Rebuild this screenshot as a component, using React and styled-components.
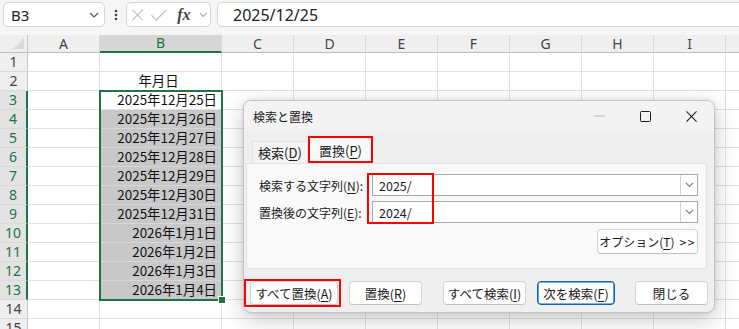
import styled, { createGlobalStyle } from 'styled-components';

const GlobalStyle = createGlobalStyle`
  html, body {
    margin: 0;
    padding: 0;
    width: 739px;
    height: 329px;
    overflow: hidden;
    background: #fff;
  }
  body {
    font-family: 'Noto Sans', 'Noto Sans CJK JP', sans-serif;
    color: #222;
  }
`;

const JP = `'Noto Sans CJK JP', 'Noto Sans', sans-serif`;

const Page = styled.div`
  position: relative;
  width: 739px;
  height: 329px;
  overflow: hidden;
`;

/* ---------- formula bar ---------- */

const Toolbar = styled.div`
  height: 35px;
  background: #f6f6f6;
  display: flex;
  align-items: flex-start;
  padding: 2px 0 0 3px;
  box-sizing: border-box;
`;

const Box = styled.div`
  height: 25px;
  box-sizing: border-box;
  background: #fff;
  border: 1px solid #d6d6d6;
  border-radius: 5px;
  display: flex;
  align-items: center;
`;

const NameBox = styled(Box)`
  width: 102px;
  padding: 0 5px 0 7px;
  justify-content: space-between;
  font-size: 15px;
  color: #222;
`;

const Ellipsis = styled.div`
  width: 21px;
  height: 25px;
  display: flex;
  align-items: center;
  justify-content: center;
`;

const FxBox = styled(Box)`
  width: 85px;
  padding: 0 3px 0 5px;
  gap: 8px;
`;

const Fx = styled.span`
  font-family: 'Liberation Serif', serif;
  font-style: italic;
  font-weight: bold;
  font-size: 16px;
  color: #444;
  margin-left: 2px;
`;

const FormulaBox = styled(Box)`
  flex: 1;
  margin-left: 6px;
  margin-right: -12px;
  padding-left: 15px;
  font-size: 16px;
  color: #222;
`;

/* ---------- sheet ---------- */

const Sheet = styled.div`
  position: relative;
  display: grid;
  grid-template-columns: 28px 72px 122px 72px 72px 72px 72px 72px 72px 72px 60px;
  grid-template-rows: 18px repeat(15, 19px);
`;

const Corner = styled.div`
  background: #efefef;
  border-right: 1px solid #c6c6c6;
  border-bottom: 1px solid #bdbdbd;
  position: relative;
  &::after {
    content: '';
    position: absolute;
    right: 3px;
    bottom: 3px;
    border-left: 11px solid transparent;
    border-bottom: 11px solid #dadada;
  }
`;

const ColHead = styled.div`
  background: ${(p) => (p.$active ? '#d6d6d6' : '#efefef')};
  border-right: 1px solid #d9d9d9;
  border-bottom: ${(p) => (p.$active ? '2px solid #217346' : '1px solid #bdbdbd')};
  color: ${(p) => (p.$active ? '#217346' : '#444')};
  font-size: 14px;
  display: flex;
  align-items: center;
  justify-content: center;
  box-sizing: border-box;
  line-height: 1;
`;

const RowHead = styled.div`
  background: ${(p) => (p.$active ? '#e3e3e3' : '#efefef')};
  border-bottom: 1px solid #d9d9d9;
  border-right: ${(p) => (p.$active ? '2px solid #217346' : '1px solid #c6c6c6')};
  color: ${(p) => (p.$active ? '#217346' : '#444')};
  font-size: 14px;
  display: flex;
  align-items: center;
  justify-content: center;
  box-sizing: border-box;
  line-height: 1;
`;

const Cell = styled.div`
  background: ${(p) => (p.$fill ? '#c8c8c8' : '#fff')};
  border-right: 1px solid #e1e1e1;
  border-bottom: 1px solid ${(p) => (p.$fill ? '#d6d6d6' : '#e1e1e1')};
  box-sizing: border-box;
  font-family: ${JP};
  font-size: 13.4px;
  color: #111;
  display: flex;
  align-items: center;
  justify-content: ${(p) => p.$align || 'flex-end'};
  padding: 0 4px 0 0;
  line-height: 1;
  white-space: nowrap;
`;

const Selection = styled.div`
  position: absolute;
  left: 99px;
  top: 55px;
  width: 124px;
  height: 211px;
  border: 2px solid #217346;
  box-sizing: border-box;
  pointer-events: none;
  &::after {
    content: '';
    position: absolute;
    right: -5px;
    bottom: -5px;
    width: 6px;
    height: 6px;
    background: #217346;
    border: 1px solid #fff;
  }
`;

/* ---------- dialog ---------- */

const Dialog = styled.div`
  position: absolute;
  left: 243px;
  top: 100px;
  width: 472px;
  height: 213px;
  box-sizing: border-box;
  background: #efefef;
  border: 1px solid #c4c4c4;
  border-radius: 8px;
  box-shadow: 0 6px 22px rgba(0, 0, 0, 0.22), 0 0 4px rgba(0, 0, 0, 0.08);
  overflow: hidden;
  font-family: ${JP};
  font-size: 12px;
  color: #1b1b1b;
`;

const TitleBar = styled.div`
  height: 30px;
  background: #f3f3f3;
  display: flex;
  align-items: center;
  padding-left: 9px;
`;

const Title = styled.div`
  flex: 1;
`;

const WinBtn = styled.div`
  width: 46px;
  height: 30px;
  display: flex;
  align-items: center;
  justify-content: center;
`;

const TabRow = styled.div`
  height: 32px;
  display: flex;
  align-items: flex-end;
  padding-left: 8px;
`;

const Tab = styled.div`
  width: ${(p) => (p.$active ? '65px' : '56px')};
  height: ${(p) => (p.$active ? '27px' : '22px')};
  box-sizing: border-box;
  display: flex;
  align-items: center;
  justify-content: center;
  font-size: 13px;
  background: ${(p) => (p.$active ? '#f9f9f9' : '#f4f4f4')};
  border: 1px solid #e2e2e2;
  border-bottom: none;
  outline: ${(p) => (p.$marked ? '2px solid #f00' : 'none')};
  outline-offset: -2px;
  position: relative;
  z-index: 1;
`;

const Panel = styled.div`
  position: relative;
  margin: 0 7px 0 2px;
  height: 106px;
  box-sizing: border-box;
  background: #f9f9f9;
  border: 1px solid #e3e3e3;
  padding: 10px 8px 0 12px;
`;

const FieldRow = styled.div`
  display: flex;
  align-items: center;
  height: 22px;
  margin-bottom: 5px;
`;

const Label = styled.div`
  width: 113px;
  font-size: 12px;
  white-space: nowrap;
`;

const Combo = styled.div`
  flex: 1;
  height: 22px;
  box-sizing: border-box;
  background: #fff;
  border: 1px solid #a8a8a8;
  display: flex;
  align-items: center;
`;

const ComboText = styled.div`
  flex: 1;
  padding-left: 6px;
  font-size: 12.5px;
`;

const ComboBtn = styled.div`
  width: 16px;
  height: 100%;
  border-left: 1px solid #d4d4d4;
  display: flex;
  align-items: center;
  justify-content: center;
`;

const Marker = styled.div`
  position: absolute;
  left: 120px;
  top: 9px;
  width: 67px;
  height: 51px;
  border: 2px solid #f00;
  box-sizing: border-box;
  pointer-events: none;
`;

const OptionRow = styled.div`
  display: flex;
  justify-content: flex-end;
  margin-top: 6px;
`;

const Button = styled.div`
  width: ${(p) => p.$w}px;
  height: ${(p) => p.$h || 24}px;
  margin-left: ${(p) => p.$ml || 0}px;
  box-sizing: border-box;
  background: #fdfdfd;
  border: 1px solid ${(p) => (p.$focus ? '#0a63b4' : '#d3d3d3')};
  border-bottom-color: ${(p) => (p.$focus ? '#0a63b4' : '#c2c2c2')};
  box-shadow: ${(p) => (p.$focus ? 'inset 0 0 0 0.6px #0a63b4' : 'none')};
  border-radius: 4px;
  display: flex;
  align-items: center;
  justify-content: center;
  font-size: ${(p) => p.$fs || 12.5}px;
  white-space: nowrap;
  flex-shrink: 0;
`;

const MarkedWrap = styled.div`
  border: 2px solid #f00;
  padding: 0 1px 0 4px;
  display: flex;
  align-items: center;
  height: 28px;
  box-sizing: border-box;
`;

const ButtonRow = styled.div`
  display: flex;
  align-items: center;
  margin-top: 10px;
`;

const U = styled.span`
  text-decoration: underline;
  text-underline-offset: 2px;
`;

const Arrows = styled.span`
  letter-spacing: 1.5px;
  margin-left: 5px;
`;

/* ---------- icons ---------- */

const Chevron = ({ size = 10, color = '#555' }) => (
  <svg width={size} height={size * 0.6} viewBox="0 0 10 6">
    <path d="M1 1l4 4 4-4" fill="none" stroke={color} strokeWidth="1.2" />
  </svg>
);

const Dots = () => (
  <svg width="4" height="12" viewBox="0 0 4 12">
    <circle cx="2" cy="2" r="1.3" fill="#444" />
    <circle cx="2" cy="6" r="1.3" fill="#444" />
    <circle cx="2" cy="10" r="1.3" fill="#444" />
  </svg>
);

const Cross = ({ size = 12, color = '#bbb', w = 1.1 }) => (
  <svg width={size} height={size} viewBox="0 0 12 12">
    <path d="M0.5 0.5l11 11M11.5 0.5l-11 11" stroke={color} strokeWidth={w} />
  </svg>
);

const Check = () => (
  <svg width="17" height="12" viewBox="0 0 17 12">
    <path d="M0.5 6l5 5.5L16.5 0.5" fill="none" stroke="#bbb" strokeWidth="1.1" />
  </svg>
);

const Minimize = () => (
  <svg width="11" height="2" viewBox="0 0 11 2">
    <path d="M0 1h11" stroke="#b5b5b5" strokeWidth="1" />
  </svg>
);

const Maximize = () => (
  <svg width="11" height="11" viewBox="0 0 11 11">
    <rect x="0.5" y="0.5" width="10" height="10" rx="1" fill="none" stroke="#1b1b1b" strokeWidth="1" />
  </svg>
);

/* ---------- data ---------- */

const cols = ['A', 'B', 'C', 'D', 'E', 'F', 'G', 'H', 'I', ''];

const dates = {
  2: '年月日',
  3: '2025年12月25日',
  4: '2025年12月26日',
  5: '2025年12月27日',
  6: '2025年12月28日',
  7: '2025年12月29日',
  8: '2025年12月30日',
  9: '2025年12月31日',
  10: '2026年1月1日',
  11: '2026年1月2日',
  12: '2026年1月3日',
  13: '2026年1月4日',
};

const rows = Array.from({ length: 15 }, (_, i) => i + 1);

export default function App() {
  return (
    <>
      <GlobalStyle />
      <Page>
        <Toolbar>
          <NameBox>
            <span>B3</span>
            <Chevron />
          </NameBox>
          <Ellipsis>
            <Dots />
          </Ellipsis>
          <FxBox>
            <Cross />
            <Check />
            <Fx>fx</Fx>
            <Chevron size={9} color="#999" />
          </FxBox>
          <FormulaBox>2025/12/25</FormulaBox>
        </Toolbar>

        <Sheet>
          <Corner />
          {cols.map((c, i) => (
            <ColHead key={'h' + i} $active={c === 'B'}>
              {c}
            </ColHead>
          ))}
          {rows.map((r) => {
            const active = r >= 3 && r <= 13;
            return [
              <RowHead key={'r' + r} $active={active}>
                {r}
              </RowHead>,
              ...cols.map((c, i) => (
                <Cell
                  key={r + '-' + i}
                  $fill={c === 'B' && r >= 4 && r <= 13}
                  $align={r === 2 ? 'center' : 'flex-end'}
                >
                  {c === 'B' ? dates[r] : null}
                </Cell>
              )),
            ];
          })}
          <Selection />
        </Sheet>

        <Dialog>
          <TitleBar>
            <Title>検索と置換</Title>
            <WinBtn>
              <Minimize />
            </WinBtn>
            <WinBtn>
              <Maximize />
            </WinBtn>
            <WinBtn>
              <Cross size={11} color="#1b1b1b" w={1.1} />
            </WinBtn>
          </TitleBar>

          <TabRow>
            <Tab>
              検索(<U>D</U>)
            </Tab>
            <Tab $active $marked>
              置換(<U>P</U>)
            </Tab>
          </TabRow>

          <Panel>
            <FieldRow>
              <Label>
                検索する文字列(<U>N</U>):
              </Label>
              <Combo>
                <ComboText>2025/</ComboText>
                <ComboBtn>
                  <Chevron size={9} color="#777" />
                </ComboBtn>
              </Combo>
            </FieldRow>
            <FieldRow>
              <Label>
                置換後の文字列(<U>E</U>):
              </Label>
              <Combo>
                <ComboText>2024/</ComboText>
                <ComboBtn>
                  <Chevron size={9} color="#777" />
                </ComboBtn>
              </Combo>
            </FieldRow>
            <Marker />
            <OptionRow>
              <Button $w={101} $h={25} $fs={12}>
                オプション(<U>T</U>)<Arrows>&gt;&gt;</Arrows>
              </Button>
            </OptionRow>
          </Panel>

          <ButtonRow>
            <MarkedWrap>
              <Button $w={88}>
                すべて置換(<U>A</U>)
              </Button>
            </MarkedWrap>
            <Button $w={73} $ml={8}>
              置換(<U>R</U>)
            </Button>
            <Button $w={83} $ml={21}>
              すべて検索(<U>I</U>)
            </Button>
            <Button $w={78} $ml={11} $focus>
              次を検索(<U>F</U>)
            </Button>
            <Button $w={73} $ml={20}>
              閉じる
            </Button>
          </ButtonRow>
        </Dialog>
      </Page>
    </>
  );
}
